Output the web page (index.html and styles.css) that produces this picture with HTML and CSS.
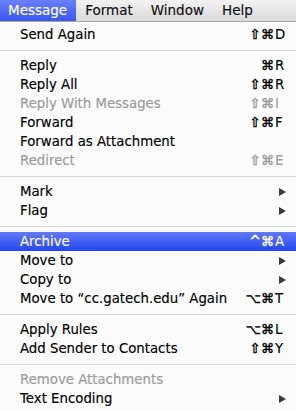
FILE: index.html
```html
<!DOCTYPE html>
<html>
<head>
<meta charset="utf-8">
<link rel="stylesheet" href="styles.css">
</head>
<body>
<div class="menubar">
  <span class="mb-item active">Message</span>
  <span class="mb-item">Format</span>
  <span class="mb-item">Window</span>
  <span class="mb-item">Help</span>
</div>
<div class="menu">
  <div class="item"><span class="label">Send Again</span><span class="sc"><span class="mod">⇧⌘</span><span class="key">D</span></span></div>
  <div class="sep"></div>
  <div class="item"><span class="label">Reply</span><span class="sc"><span class="mod">⌘</span><span class="key">R</span></span></div>
  <div class="item"><span class="label">Reply All</span><span class="sc"><span class="mod">⇧⌘</span><span class="key">R</span></span></div>
  <div class="item disabled"><span class="label">Reply With Messages</span><span class="sc"><span class="mod">⇧⌘</span><span class="key">I</span></span></div>
  <div class="item"><span class="label">Forward</span><span class="sc"><span class="mod">⇧⌘</span><span class="key">F</span></span></div>
  <div class="item"><span class="label">Forward as Attachment</span></div>
  <div class="item disabled"><span class="label">Redirect</span><span class="sc"><span class="mod">⇧⌘</span><span class="key">E</span></span></div>
  <div class="sep"></div>
  <div class="item"><span class="label">Mark</span><span class="arrow"></span></div>
  <div class="item"><span class="label">Flag</span><span class="arrow"></span></div>
  <div class="sep"></div>
  <div class="item selected"><span class="label">Archive</span><span class="sc"><span class="mod">^⌘</span><span class="key">A</span></span></div>
  <div class="item"><span class="label">Move to</span><span class="arrow"></span></div>
  <div class="item"><span class="label">Copy to</span><span class="arrow"></span></div>
  <div class="item"><span class="label">Move to “cc.gatech.edu” Again</span><span class="sc"><span class="mod">⌥⌘</span><span class="key">T</span></span></div>
  <div class="sep"></div>
  <div class="item"><span class="label">Apply Rules</span><span class="sc"><span class="mod">⌥⌘</span><span class="key">L</span></span></div>
  <div class="item"><span class="label">Add Sender to Contacts</span><span class="sc"><span class="mod">⇧⌘</span><span class="key">Y</span></span></div>
  <div class="sep"></div>
  <div class="item disabled"><span class="label">Remove Attachments</span></div>
  <div class="item"><span class="label">Text Encoding</span><span class="arrow"></span></div>
</div>
</body>
</html>
```

FILE: styles.css
```css
html, body {
  margin: 0;
  padding: 0;
  background: #fbfbfb;
  font-family: "DejaVu Sans", "Liberation Sans", sans-serif;
  font-size: 13.3px;
  color: #000;
  overflow: hidden;
  -webkit-text-stroke: 0.15px currentColor;
}
.menubar {
  height: 21px;
  display: flex;
  align-items: stretch;
  background: linear-gradient(#f2f2f2, #d9d9d9);
  border-bottom: 1px solid #a8a8a8;
}
.mb-item {
  padding: 0 9px;
  line-height: 21px;
  color: #111;
  font-size: 13.5px;
}
.mb-item.active {
  padding-left: 8px;
  color: #fff;
  background: linear-gradient(#6a7ff7, #3a56f1);
}
.menu {
  padding-top: 3px;
  background: #fbfbfb;
}
.item {
  height: 19px;
  line-height: 19px;
  display: flex;
  align-items: center;
  padding: 0 10px 0 20px;
  white-space: nowrap;
}
.item .label {
  flex: 1;
}
.item.disabled {
  color: #9a9a9a;
}
.item.selected {
  color: #fff;
  background: linear-gradient(#6379f6, #2346ef);
}
.sc {
  display: flex;
}
.mod {
  text-align: right;
  -webkit-text-stroke: 0.4px currentColor;
}
.key {
  width: 11px;
  padding-left: 1px;
  text-align: left;
}
.arrow {
  width: 0;
  height: 0;
  border-left: 7px solid #3a3a3a;
  border-top: 4.5px solid transparent;
  border-bottom: 4.5px solid transparent;
}
.sep {
  height: 12px;
  display: flex;
  align-items: center;
}
.sep::before {
  content: "";
  display: block;
  width: 100%;
  height: 1px;
  background: #dadada;
}
```
